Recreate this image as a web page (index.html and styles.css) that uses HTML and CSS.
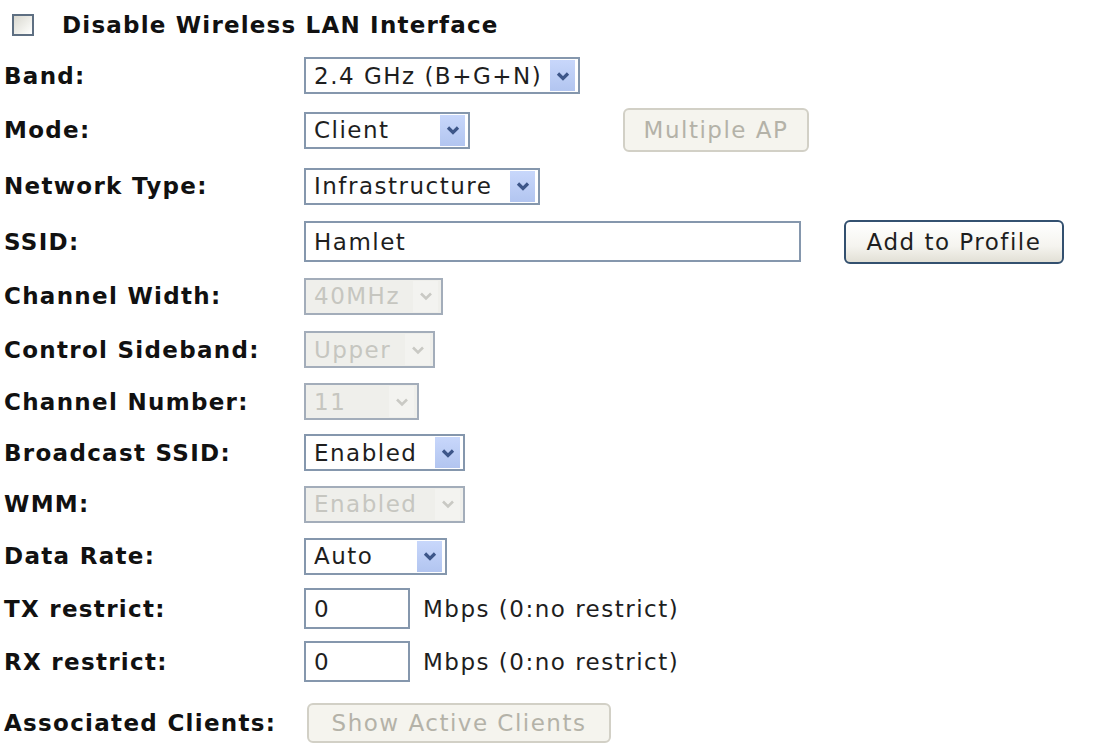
FILE: index.html
```html
<!DOCTYPE html>
<html lang="en">
<head>
  <meta charset="UTF-8" />
  <title>Wireless Basic Settings</title>
  <link rel="stylesheet" href="styles.css">
</head>
<body>
  <form class="wlan" id="wlanForm">
    <label class="switch">
      <input type="checkbox" id="wlanDisabled" />
      <span>Disable Wireless LAN Interface</span>
    </label>

    <div class="fields">
      <div class="name">Band:</div>
      <div class="ctrl">
        <span class="combo w-band">
          <select id="band">
            <option>2.4 GHz (B)</option>
            <option>2.4 GHz (G)</option>
            <option>2.4 GHz (N)</option>
            <option>2.4 GHz (B+G)</option>
            <option>2.4 GHz (G+N)</option>
            <option selected>2.4 GHz (B+G+N)</option>
          </select>
          <i class="drop"><svg viewBox="0 0 14 10"><path d="M2 2.5 L7 7.5 L12 2.5"/></svg></i>
        </span>
      </div>

      <div class="name">Mode:</div>
      <div class="ctrl">
        <span class="combo w-mode">
          <select id="mode">
            <option>AP</option>
            <option selected>Client</option>
            <option>WDS</option>
            <option>AP+WDS</option>
          </select>
          <i class="drop"><svg viewBox="0 0 14 10"><path d="M2 2.5 L7 7.5 L12 2.5"/></svg></i>
        </span>
        <button type="button" class="btn btn-multi" disabled>Multiple AP</button>
      </div>

      <div class="name">Network Type:</div>
      <div class="ctrl">
        <span class="combo w-type">
          <select id="netType">
            <option selected>Infrastructure</option>
            <option>Adhoc</option>
          </select>
          <i class="drop"><svg viewBox="0 0 14 10"><path d="M2 2.5 L7 7.5 L12 2.5"/></svg></i>
        </span>
      </div>

      <div class="name">SSID:</div>
      <div class="ctrl">
        <input type="text" class="text w-ssid" id="ssid" value="Hamlet" />
        <button type="button" class="btn btn-profile">Add to Profile</button>
      </div>

      <div class="name">Channel Width:</div>
      <div class="ctrl">
        <span class="combo off w-width">
          <select disabled>
            <option>20MHz</option>
            <option selected>40MHz</option>
          </select>
          <i class="drop"><svg viewBox="0 0 14 10"><path d="M2 2.5 L7 7.5 L12 2.5"/></svg></i>
        </span>
      </div>

      <div class="name">Control Sideband:</div>
      <div class="ctrl">
        <span class="combo off w-side">
          <select disabled>
            <option selected>Upper</option>
            <option>Lower</option>
          </select>
          <i class="drop"><svg viewBox="0 0 14 10"><path d="M2 2.5 L7 7.5 L12 2.5"/></svg></i>
        </span>
      </div>

      <div class="name">Channel Number:</div>
      <div class="ctrl">
        <span class="combo off w-chan">
          <select disabled>
            <option>1</option>
            <option>6</option>
            <option selected>11</option>
          </select>
          <i class="drop"><svg viewBox="0 0 14 10"><path d="M2 2.5 L7 7.5 L12 2.5"/></svg></i>
        </span>
      </div>

      <div class="name">Broadcast SSID:</div>
      <div class="ctrl">
        <span class="combo w-onoff">
          <select id="broadcast">
            <option selected>Enabled</option>
            <option>Disabled</option>
          </select>
          <i class="drop"><svg viewBox="0 0 14 10"><path d="M2 2.5 L7 7.5 L12 2.5"/></svg></i>
        </span>
      </div>

      <div class="name">WMM:</div>
      <div class="ctrl">
        <span class="combo off w-onoff">
          <select disabled>
            <option selected>Enabled</option>
            <option>Disabled</option>
          </select>
          <i class="drop"><svg viewBox="0 0 14 10"><path d="M2 2.5 L7 7.5 L12 2.5"/></svg></i>
        </span>
      </div>

      <div class="name">Data Rate:</div>
      <div class="ctrl">
        <span class="combo w-rate">
          <select id="rate">
            <option selected>Auto</option>
            <option>1M</option>
            <option>2M</option>
            <option>5.5M</option>
            <option>11M</option>
          </select>
          <i class="drop"><svg viewBox="0 0 14 10"><path d="M2 2.5 L7 7.5 L12 2.5"/></svg></i>
        </span>
      </div>

      <div class="name">TX restrict:</div>
      <div class="ctrl">
        <input type="text" class="text w-mbps" id="txRestrict" value="0" />
        <span class="unit">Mbps (0:no restrict)</span>
      </div>

      <div class="name">RX restrict:</div>
      <div class="ctrl">
        <input type="text" class="text w-mbps" id="rxRestrict" value="0" />
        <span class="unit">Mbps (0:no restrict)</span>
      </div>

      <div class="name">Associated Clients:</div>
      <div class="ctrl">
        <button type="button" class="btn btn-clients" disabled>Show Active Clients</button>
      </div>
    </div>
  </form>
</body>
</html>
```

FILE: styles.css
```css
/* page */
html, body {
  margin: 0;
  padding: 0;
  background: #fff;
  overflow: hidden;
}
body {
  font-family: Verdana, "DejaVu Sans", sans-serif;
  font-size: 23px;
  color: #111;
}

.wlan {
  padding-left: 4px;
}

/* top checkbox line */
.switch {
  height: 49px;
  display: flex;
  align-items: center;
  gap: 28px;
  padding-left: 8px;
  font-weight: bold;
  letter-spacing: 1.2px;
}
.switch input {
  appearance: none;
  margin: 0;
  width: 22px;
  height: 22px;
  box-sizing: border-box;
  border: 2px solid #5e6f82;
  background: linear-gradient(135deg, #d9d8d0, #f4f4f0 70%, #fff);
}

/* label / control grid */
.fields {
  display: grid;
  grid-template-columns: 300px auto;
  grid-template-rows: 53px 56px 56px 55px 54px 53px 51px 51px 52px 52px 53px 53px 70px;
  align-items: center;
}
.name {
  font-weight: bold;
  letter-spacing: 1.3px;
}
.ctrl {
  display: flex;
  align-items: center;
  letter-spacing: 1.5px;
}

/* drop-down lists */
.combo {
  display: inline-flex;
  box-sizing: border-box;
  height: 37px;
  border: 2px solid #8597ad;
  background: #fff;
}
.combo select {
  appearance: none;
  flex: 1;
  min-width: 0;
  border: 0;
  margin: 0;
  padding: 0 0 0 8px;
  background: transparent;
  font: inherit;
  letter-spacing: inherit;
  color: #1e1e1e;
  outline: none;
}
.drop {
  width: 25px;
  margin: 1px 3px 1px 0;
  display: flex;
  align-items: center;
  justify-content: center;
  background: linear-gradient(#c8d7fb, #b2c5f0);
}
.drop svg {
  width: 14px;
  height: 10px;
  fill: none;
  stroke: #3d5689;
  stroke-width: 3.2;
}

.combo.off {
  background: #efefeb;
  border-color: #a3adba;
}
.combo.off select {
  color: #b5b5ae;
}
.combo.off .drop {
  background: #f3f3f0;
}
.combo.off .drop svg {
  stroke: #c9c9c4;
  stroke-width: 2.6;
}

.w-band  { width: 276px; }
.w-mode  { width: 166px; }
.w-type  { width: 236px; }
.w-width { width: 139px; }
.w-side  { width: 131px; }
.w-chan  { width: 115px; }
.w-onoff { width: 161px; }
.w-rate  { width: 143px; }

/* text boxes */
.text {
  box-sizing: border-box;
  height: 41px;
  margin: 0;
  padding: 0 0 0 8px;
  border: 2px solid #8597ad;
  font: inherit;
  letter-spacing: inherit;
  color: #1e1e1e;
  outline: none;
}
.w-ssid { width: 497px; }
.w-mbps { width: 106px; }

.unit {
  margin-left: 13px;
  color: #1e1e1e;
}

/* buttons */
.btn {
  box-sizing: border-box;
  height: 44px;
  margin: 0;
  padding: 0;
  border: 2px solid #33506f;
  border-radius: 6px;
  background: linear-gradient(#fff, #f5f4ef 60%, #e2e0d6);
  font: inherit;
  letter-spacing: inherit;
  color: #1e1e1e;
  cursor: pointer;
}
.btn:disabled {
  border-color: #d2d0c6;
  background: #f5f4ee;
  color: #b4b2a8;
  cursor: default;
}
.btn-multi {
  width: 186px;
  margin-left: 153px;
}
.btn-profile {
  width: 220px;
  margin-left: 43px;
}
.btn-clients {
  width: 304px;
  height: 40px;
  margin-left: 3px;
}
```
